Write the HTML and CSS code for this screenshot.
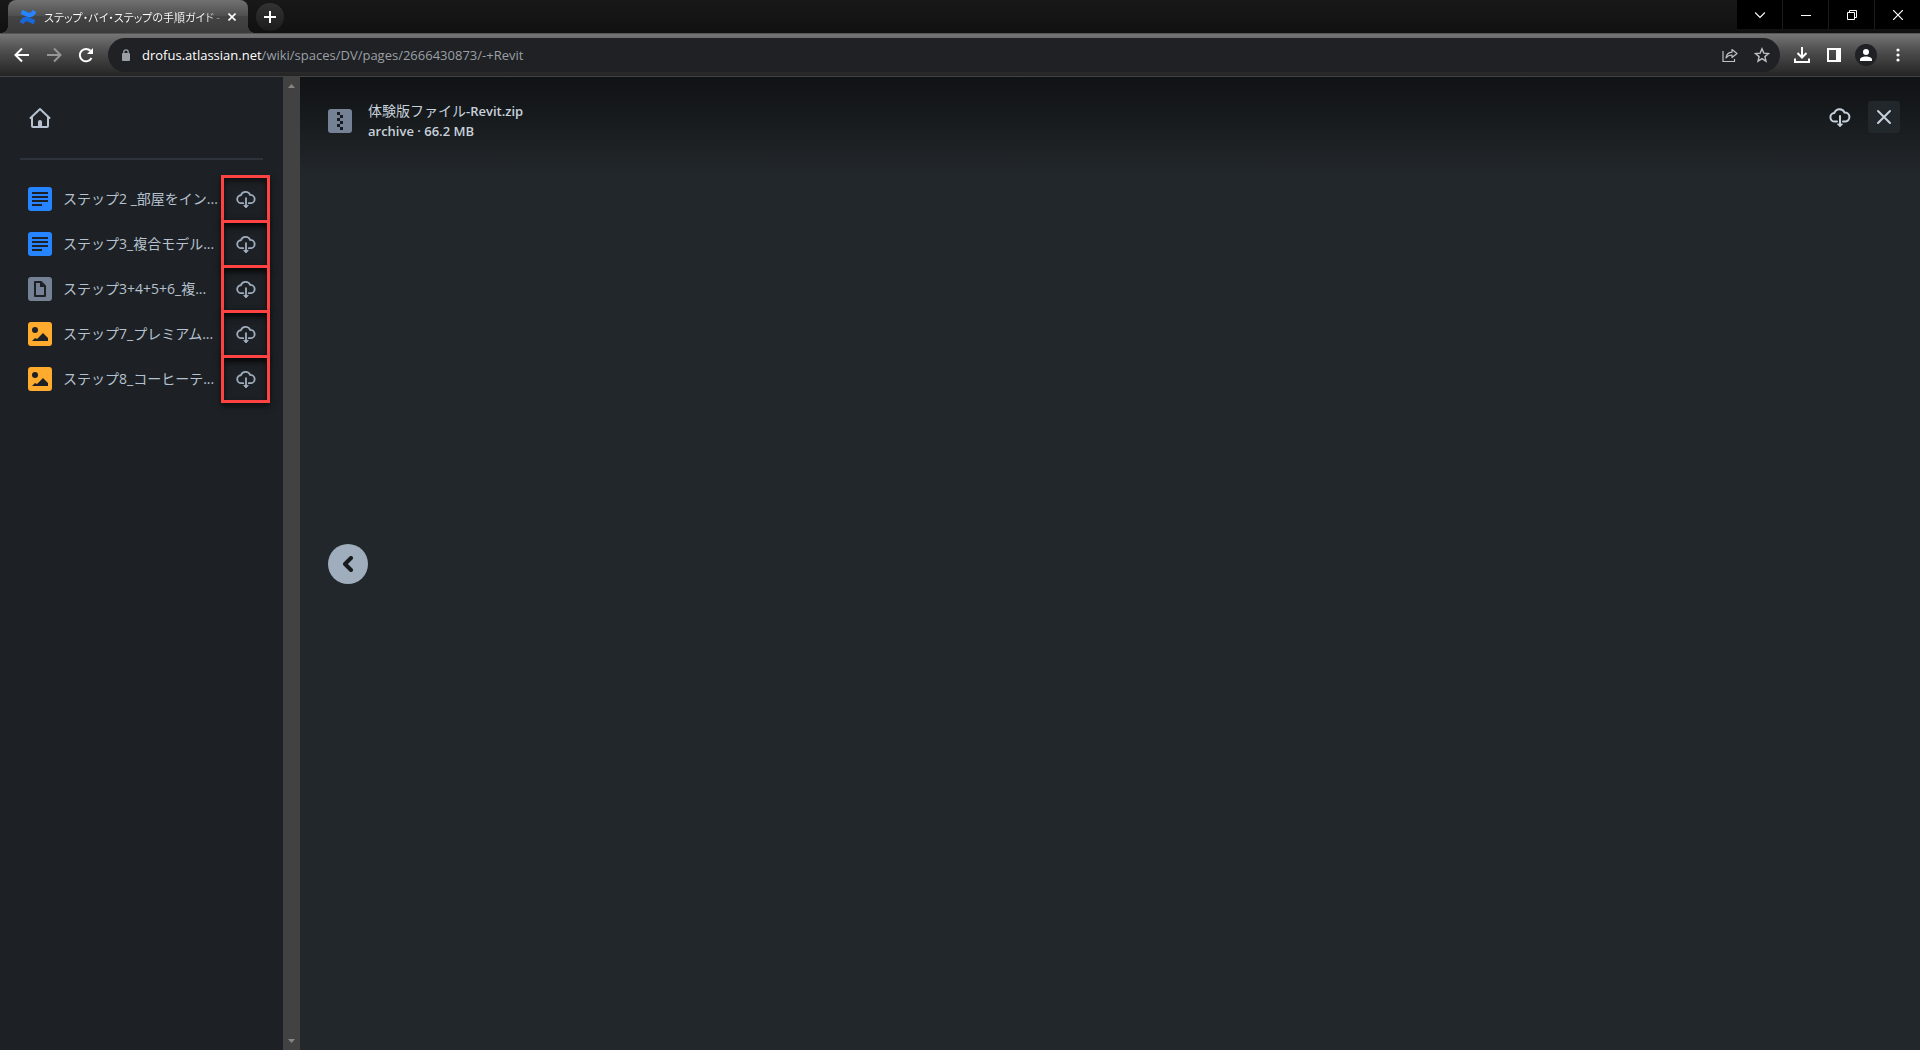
FILE: index.html
```html
<!DOCTYPE html>
<html lang="ja">
<head>
  <meta charset="UTF-8" />
  <meta name="viewport" content="width=device-width, initial-scale=1.0"/>
  <title>ステップ・バイ・ステップの手順ガイド</title>
  <link rel="stylesheet" href="styles.css">
</head>
<body>

  <!-- Shared icons -->
  <svg class="sprite" aria-hidden="true">
    <symbol id="cloud" viewBox="0 0 24 24">
      <path d="M9 16.5H7a4.3 4.3 0 0 1-.6-8.6A5.5 5.5 0 0 1 16.6 7.6a4.5 4.5 0 0 1 1.2 8.9H15" fill="none" stroke="currentColor" stroke-width="2" stroke-linecap="round"/>
      <path d="M12 11v9" stroke="currentColor" stroke-width="2" stroke-linecap="round"/>
      <path d="M9.500 19h5L12 21.800z" fill="currentColor" stroke="currentColor" stroke-linejoin="round"/>
    </symbol>
    <symbol id="doc" viewBox="0 0 24 24">
      <rect width="24" height="24" rx="3" fill="#2684ff"/>
      <path d="M4 6h16M4 10h16M4 14h16M4 18h10" stroke="#1d2125" stroke-width="2"/>
    </symbol>
    <symbol id="image" viewBox="0 0 24 24">
      <rect width="24" height="24" rx="3" fill="#ffab2e"/>
      <circle cx="7" cy="8" r="3" fill="#1d2125"/>
      <path d="M4 19l3-3 2 1 6-6 5 5v3z" fill="#1d2125"/>
    </symbol>
  </svg>

  <!-- Tab strip -->
  <div class="tab-strip">
    <div class="tab">
      <svg class="favicon" viewBox="0 0 16 16">
        <path d="M1.500 14C4 9.500 6 9.300 9 10.700l5.500 2.400" fill="none" stroke="#1868db" stroke-width="4.500"/>
        <path d="M14.500 2C12 6.500 10 6.700 7 5.300L1.500 2.900" fill="none" stroke="#2684ff" stroke-width="4.500"/>
      </svg>
      <span class="tab-title">ステップ・バイ・ステップの手順ガイド -</span>
      <button class="tab-close" aria-label="Close tab">
        <svg width="8" height="8" viewBox="0 0 8 8"><path d="M.5.5l7 7M7.500.5l-7 7" stroke="#fff" stroke-width="1.600"/></svg>
      </button>
    </div>
    <button class="new-tab" aria-label="New tab">
      <svg width="12" height="12" viewBox="0 0 12 12"><path d="M6 0v12M0 6h12" stroke="#fff" stroke-width="2"/></svg>
    </button>
    <div class="window-controls">
      <button aria-label="Search tabs"><svg width="10" height="10" viewBox="0 0 10 10"><path d="M0 2.500l5 5 5-5" fill="none" stroke="#fff" stroke-width="1.200"/></svg></button>
      <button aria-label="Minimize"><svg width="10" height="10" viewBox="0 0 10 10"><path d="M0 5.500h10" stroke="#fff"/></svg></button>
      <button aria-label="Restore"><svg width="10" height="10" viewBox="0 0 10 10"><path d="M.5 2.500h7v7h-7zM2.500 2.500v-2h7v7h-2" fill="none" stroke="#fff"/></svg></button>
      <button aria-label="Close"><svg width="10" height="10" viewBox="0 0 10 10"><path d="M0 0l10 10M10 0L0 10" stroke="#fff" stroke-width="1.200"/></svg></button>
    </div>
  </div>

  <!-- Toolbar -->
  <div class="toolbar">
    <div class="tools">
      <button aria-label="Back"><svg width="16" height="16" viewBox="0 0 16 16"><path d="M15 8H2M8 1.500L1.500 8 8 14.500" fill="none" stroke="#fff" stroke-width="2"/></svg></button>
      <button aria-label="Forward"><svg width="16" height="16" viewBox="0 0 16 16"><path d="M1 8h13M8 1.500L14.500 8 8 14.500" fill="none" stroke="#969696" stroke-width="2"/></svg></button>
      <button aria-label="Reload"><svg width="16" height="16" viewBox="0 0 16 16"><path d="M13.500 11A6.200 6.200 0 1 1 12.500 3.800" fill="none" stroke="#fff" stroke-width="2"/><path d="M15 1v6H9z" fill="#fff"/></svg></button>
    </div>
    <div class="omnibox">
      <svg class="lock" width="10" height="12" viewBox="0 0 10 12"><rect x="1" y="4" width="8" height="8" rx="1" fill="#9aa0a6"/><path d="M2.800 5V3a2.200 2.200 0 0 1 4.400 0v2" fill="none" stroke="#9aa0a6" stroke-width="1.300"/></svg>
      <a class="url" href="#"><span class="host">drofus.atlassian.net</span>/wiki/spaces/DV/pages/2666430873/-+Revit</a>
      <div class="tools">
        <button aria-label="Share"><svg width="16" height="16" viewBox="0 0 16 16"><path d="M1 4v10.500h11.500V12" fill="none" stroke="#bdc1c6" stroke-width="1.200"/><path d="M4 11c.5-4 2.500-5.500 6-5.800V2.500L15 6.500l-5 4V8C7.500 8 5.500 8.800 4 11z" fill="none" stroke="#bdc1c6" stroke-width="1.200" stroke-linejoin="round"/></svg></button>
        <button aria-label="Bookmark"><svg width="16" height="16" viewBox="0 0 16 16"><path d="M8 1.800l1.800 4.300 4.700.4-3.600 3.100 1.100 4.600L8 11.700l-4 2.500 1.100-4.600L1.500 6.500l4.700-.4z" fill="none" stroke="#bdc1c6" stroke-width="1.400"/></svg></button>
      </div>
    </div>
    <div class="tools">
      <button aria-label="Downloads"><svg width="16" height="16" viewBox="0 0 16 16"><path d="M8 0v10M3.500 6L8 10.500 12.500 6M1 11.500V15h14v-3.500" fill="none" stroke="#fff" stroke-width="2"/></svg></button>
      <button aria-label="Side panel"><svg width="14" height="14" viewBox="0 0 14 14"><path d="M1 1h12v12H1z" fill="none" stroke="#fff" stroke-width="2"/><path d="M9 1h4v12H9z" fill="#fff"/></svg></button>
      <button aria-label="Profile"><svg width="22" height="22" viewBox="0 0 22 22"><circle cx="11" cy="11" r="11" fill="#202124"/><circle cx="11" cy="8" r="3" fill="#fff"/><path d="M5 17v-1.500c0-2 3-3 6-3s6 1 6 3V17z" fill="#fff"/></svg></button>
      <button aria-label="Menu"><svg width="4" height="14" viewBox="0 0 4 14"><circle cx="2" cy="2" r="1.600" fill="#fff"/><circle cx="2" cy="7" r="1.600" fill="#fff"/><circle cx="2" cy="12" r="1.600" fill="#fff"/></svg></button>
    </div>
  </div>

  <!-- Page -->
  <div class="viewer">
    <aside class="sidebar">
      <a class="home" href="#" aria-label="Home">
        <svg width="24" height="24" viewBox="0 0 24 24"><path d="M2.500 12L12 3l9.500 9" fill="none" stroke="currentColor" stroke-width="2" stroke-linecap="round" stroke-linejoin="round"/><path d="M4 11v9a1 1 0 0 0 1 1h14a1 1 0 0 0 1-1v-9" fill="none" stroke="currentColor" stroke-width="2"/><path d="M10 21v-5a2 2 0 0 1 4 0v5z" fill="currentColor"/></svg>
      </a>
      <ul class="files">
        <li>
          <svg class="file-icon"><use href="#doc"/></svg>
          <a href="#">ステップ2 _部屋をイン...</a>
          <button class="download" aria-label="Download"><svg width="22" height="22"><use href="#cloud"/></svg></button>
        </li>
        <li>
          <svg class="file-icon"><use href="#doc"/></svg>
          <a href="#">ステップ3_複合モデル...</a>
          <button class="download" aria-label="Download"><svg width="22" height="22"><use href="#cloud"/></svg></button>
        </li>
        <li>
          <svg class="file-icon" viewBox="0 0 24 24"><rect width="24" height="24" rx="3" fill="#758195"/><path d="M7 5h6l4 4v10H7z" fill="none" stroke="#1d2125" stroke-width="2" stroke-linejoin="round"/><path d="M12 5v5h5z" fill="#1d2125"/></svg>
          <a href="#">ステップ3+4+5+6_複...</a>
          <button class="download" aria-label="Download"><svg width="22" height="22"><use href="#cloud"/></svg></button>
        </li>
        <li>
          <svg class="file-icon"><use href="#image"/></svg>
          <a href="#">ステップ7_プレミアム...</a>
          <button class="download" aria-label="Download"><svg width="22" height="22"><use href="#cloud"/></svg></button>
        </li>
        <li>
          <svg class="file-icon"><use href="#image"/></svg>
          <a href="#">ステップ8_コーヒーテ...</a>
          <button class="download" aria-label="Download"><svg width="22" height="22"><use href="#cloud"/></svg></button>
        </li>
      </ul>
    </aside>

    <div class="scrollbar">
      <svg width="7" height="4" viewBox="0 0 7 4"><path d="M3.500 0L7 4H0z" fill="#868686"/></svg>
      <svg width="7" height="4" viewBox="0 0 7 4"><path d="M3.500 4L7 0H0z" fill="#868686"/></svg>
    </div>

    <main class="preview">
      <header class="preview-header">
        <svg class="file-icon" viewBox="0 0 24 24"><rect width="24" height="24" rx="3" fill="#758195"/><path d="M9 3h3v3H9zM12 6h3v3h-3zM9 9h3v3H9zM12 12h3v3h-3zM9 15h3v3H9zM12 18h3v3h-3z" fill="#161a1d"/></svg>
        <div class="file-info">
          <div><span class="jp">体験版ファイル</span>-Revit.zip</div>
          <div>archive · 66.2 MB</div>
        </div>
        <button class="header-button" aria-label="Download"><svg width="24" height="24"><use href="#cloud"/></svg></button>
        <button class="header-button close" aria-label="Close"><svg width="16" height="16" viewBox="0 0 16 16"><path d="M2 2l12 12M14 2L2 14" stroke="currentColor" stroke-width="2" stroke-linecap="round"/></svg></button>
      </header>
      <div class="stage">
        <button class="prev" aria-label="Previous"><svg width="10" height="16" viewBox="0 0 10 16"><path d="M8 2L2 8l6 6" fill="none" stroke="#161a1d" stroke-width="4" stroke-linecap="round" stroke-linejoin="round"/></svg></button>
      </div>
    </main>
  </div>

</body>
</html>
```

FILE: styles.css
```css
* {
  box-sizing: border-box;
}

body {
  margin: 0;
  height: 100vh;
  display: flex;
  flex-direction: column;
  background: #22272b;
  color: #b6c2cf;
  font-family: "Open Sans", "Noto Sans CJK JP", sans-serif;
  font-size: 14px;
  line-height: 20px;
}

button {
  display: flex;
  align-items: center;
  justify-content: center;
  padding: 0;
  border: none;
  background: none;
  color: inherit;
  cursor: pointer;
}

a {
  color: inherit;
  text-decoration: none;
}

svg {
  flex: none;
}

.sprite {
  position: absolute;
  width: 0;
  height: 0;
}

/* tab strip */
.tab-strip {
  display: flex;
  height: 33px;
  padding-left: 8px;
  background: linear-gradient(#181818, #111);
}

.tab {
  position: relative;
  display: flex;
  align-items: center;
  width: 240px;
  padding: 0 10px 0 12px;
  border-radius: 8px 8px 0 0;
  background: linear-gradient(#717171, #4e4e4e 50%, #444 50%, #3a3a3a);
}

/* curved feet of the active tab */
.tab::before,
.tab::after {
  content: "";
  position: absolute;
  bottom: 0;
  width: 8px;
  height: 8px;
}

.tab::before {
  right: 100%;
  background: radial-gradient(circle at 0 0, transparent 8px, #3c3c3c 8px);
}

.tab::after {
  left: 100%;
  background: radial-gradient(circle at 100% 0, transparent 8px, #3c3c3c 8px);
}

.favicon {
  width: 16px;
  height: 16px;
}

.tab-title {
  flex: 1;
  margin-left: 8px;
  overflow: hidden;
  white-space: nowrap;
  background: linear-gradient(to right, #fff 88%, #666);
  background-clip: text;
  color: transparent;
  font-family: "Noto Sans CJK JP", sans-serif;
  font-size: 11px;
  font-feature-settings: "palt";
}

.tab-close {
  width: 12px;
  height: 16px;
}

.new-tab {
  width: 28px;
  height: 28px;
  margin: 3px 0 0 8px;
  border-radius: 50%;
  background: linear-gradient(#333, #1c1c1c);
}

.window-controls {
  display: flex;
  gap: 1px;
  height: 29px;
  margin-left: auto;
  background: #1c1c1c;
}

.window-controls button {
  width: 45px;
  background: #000;
}

/* toolbar */
.toolbar {
  display: flex;
  align-items: center;
  gap: 6px;
  height: 44px;
  padding: 0 6px;
  border-top: 1px solid #555;
  border-bottom: 1px solid #444;
  background: linear-gradient(#757575, #4e4e4e 40%, #242424);
}

.tools {
  display: flex;
}

.tools button {
  width: 32px;
  height: 32px;
}

.omnibox {
  flex: 1;
  display: flex;
  align-items: center;
  height: 34px;
  padding: 0 2px 0 13px;
  border-radius: 17px;
  background: #202124;
}

.url {
  flex: 1;
  margin-left: 11px;
  color: #9aa0a6;
  font-size: 13px;
}

.host {
  color: #fff;
}

/* viewer */
.viewer {
  flex: 1;
  display: flex;
  min-height: 0;
}

.sidebar {
  width: 283px;
  background: #1d2125;
}

.home {
  display: flex;
  height: 83px;
  margin: 0 20px;
  padding: 29px 8px 0;
  border-bottom: 2px solid #2c333a;
}

.files {
  margin: 0;
  padding: 16px 13px 0 28px;
  list-style: none;
}

.files li {
  display: flex;
  align-items: center;
  height: 45px;
}

.files a {
  flex: 1;
  margin-left: 11px;
  white-space: nowrap;
}

.file-icon {
  width: 24px;
  height: 24px;
}

.download {
  width: 49px;
  height: 48px;
  border: 3px solid #ff4343;
  box-shadow: 0 3px 6px #0009, inset 0 3px 6px #0009;
  color: #9fadbc;
}

.scrollbar {
  display: flex;
  flex-direction: column;
  align-items: center;
  justify-content: space-between;
  width: 17px;
  padding: 7px 0;
  background: #424242;
}

.preview {
  flex: 1;
  display: grid;
}

.preview > * {
  grid-area: 1 / 1;
}

.preview-header {
  align-self: start;
  display: flex;
  align-items: flex-start;
  height: 98px;
  padding: 24px 20px 0 28px;
  background: linear-gradient(#101214, #22272b);
}

.preview-header .file-icon {
  margin-top: 8px;
}

.file-info {
  flex: 1;
  margin-left: 16px;
  color: #c7d1db;
  font-size: 13px;
  font-weight: 600;
}

.jp {
  font-size: 14px;
  font-weight: 400;
}

.header-button {
  width: 32px;
  height: 32px;
  margin-left: 12px;
  border-radius: 3px;
  color: #c7d1db;
}

.close {
  background: #22272b;
}

.stage {
  display: flex;
  align-items: center;
  align-self: center;
  padding-left: 28px;
}

.prev {
  width: 40px;
  height: 40px;
  border-radius: 50%;
  background: #9fadbc;
}
```
